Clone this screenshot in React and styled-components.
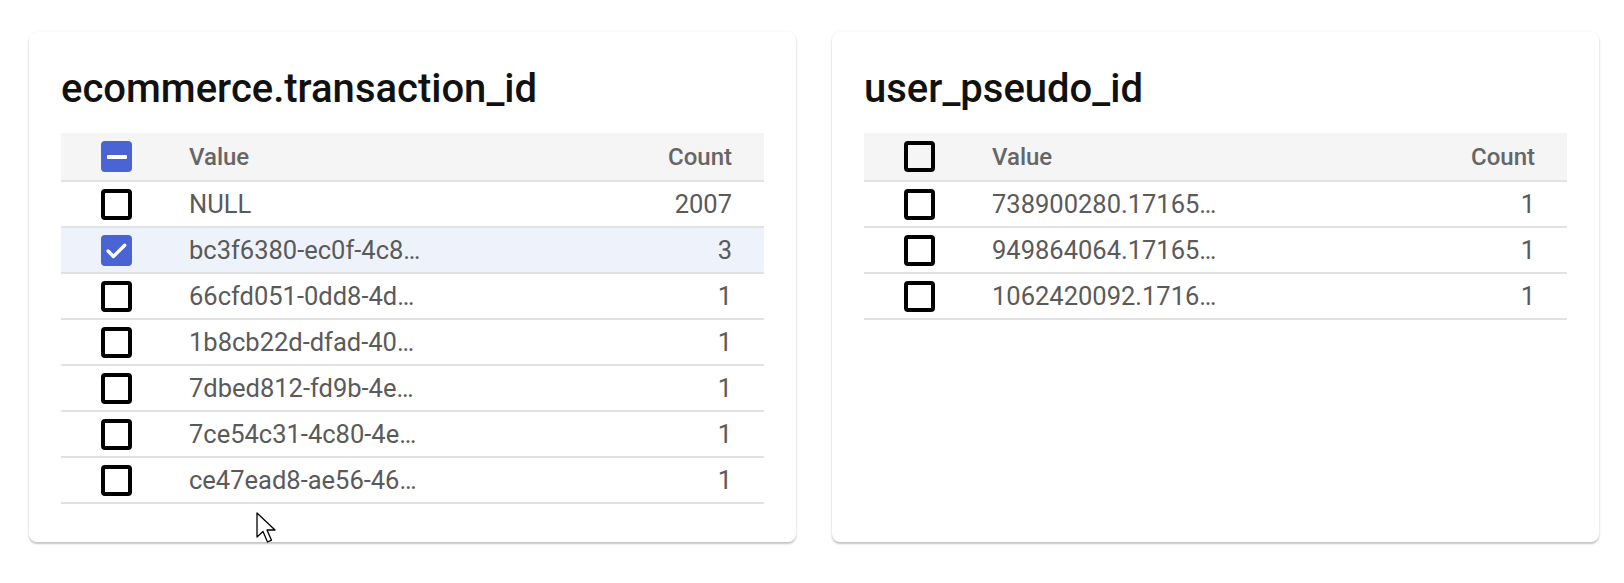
import React from 'react';
import styled, { createGlobalStyle } from 'styled-components';

const leftRows = [
  { value: 'NULL', count: 2007 },
  { value: 'bc3f6380-ec0f-4c8…', count: 3, checked: true },
  { value: '66cfd051-0dd8-4d…', count: 1 },
  { value: '1b8cb22d-dfad-40…', count: 1 },
  { value: '7dbed812-fd9b-4e…', count: 1 },
  { value: '7ce54c31-4c80-4e…', count: 1 },
  { value: 'ce47ead8-ae56-46…', count: 1 },
];

const rightRows = [
  { value: '738900280.17165…', count: 1 },
  { value: '949864064.17165…', count: 1 },
  { value: '1062420092.1716…', count: 1 },
];

const Checkbox = ({ state }) => {
  if (state === 'checked') {
    return (
      <Box filled>
        <svg width="27" height="27" viewBox="0 0 24 24">
          <path d="M4.5 12.5l4.8 4.8 10-10" fill="none" stroke="#fff" strokeWidth="3" strokeLinecap="round" strokeLinejoin="round" />
        </svg>
      </Box>
    );
  }
  if (state === 'mixed') {
    return (
      <Box filled>
        <Dash />
      </Box>
    );
  }
  return <Box />;
};

const FieldCard = ({ title, headerState, rows }) => (
  <Card>
    <Title>{title}</Title>
    <Table>
      <HeaderRow>
        <CheckCell>
          <Checkbox state={headerState} />
        </CheckCell>
        <HeadLabel>Value</HeadLabel>
        <HeadLabel right>Count</HeadLabel>
      </HeaderRow>
      {rows.map((r, i) => (
        <Row key={i} selected={r.checked}>
          <CheckCell>
            <Checkbox state={r.checked ? 'checked' : 'empty'} />
          </CheckCell>
          <Cell>{r.value}</Cell>
          <Cell right>{r.count}</Cell>
        </Row>
      ))}
    </Table>
  </Card>
);

const App = () => (
  <>
    <GlobalStyle />
    <Page>
      <FieldCard title="ecommerce.transaction_id" headerState="mixed" rows={leftRows} />
      <FieldCard title="user_pseudo_id" headerState="empty" rows={rightRows} />
      <Pointer width="22" height="34" viewBox="0 0 22 34">
        <path d="M1 1 L1 25 L7 19.5 L11.5 30 L15.5 28.2 L11 18 L19 18 Z" fill="#fff" stroke="#000" strokeWidth="1.3" strokeLinejoin="round" />
      </Pointer>
    </Page>
  </>
);

export default App;

const GlobalStyle = createGlobalStyle`
  body {
    margin: 0;
    background: #ffffff;
    font-family: Roboto, 'Liberation Sans', sans-serif;
  }
`;

const Page = styled.div`
  position: relative;
  display: flex;
  gap: 36px;
  padding: 32px 0 0 29px;
  height: 583px;
  box-sizing: border-box;
`;

const Card = styled.div`
  width: 767px;
  height: 510px;
  box-sizing: border-box;
  background: #fff;
  border-radius: 8px;
  box-shadow: 0 2px 2px rgba(0, 0, 0, 0.22), 0 0 3px rgba(0, 0, 0, 0.06);
  padding: 33px 32px 0 32px;
`;

const Title = styled.h2`
  margin: 0 0 20px 0;
  font-size: 40px;
  line-height: 48px;
  font-weight: 500;
  color: #111;
`;

const Table = styled.div`
  display: flex;
  flex-direction: column;
`;

const HeaderRow = styled.div`
  display: grid;
  grid-template-columns: 128px 1fr auto;
  align-items: center;
  height: 47px;
  padding-right: 32px;
  background: #f5f5f5;
  border-bottom: 2px solid #e2e2e2;
`;

const Row = styled(HeaderRow)`
  height: 44px;
  background: ${(p) => (p.selected ? '#eef2fb' : '#fff')};
`;

const CheckCell = styled.div`
  display: flex;
  padding-left: 40px;
`;

const Box = styled.div`
  width: 31px;
  height: 31px;
  box-sizing: border-box;
  border-radius: 4px;
  border: ${(p) => (p.filled ? 'none' : '4px solid #000')};
  background: ${(p) => (p.filled ? '#4a64d3' : 'transparent')};
  display: flex;
  align-items: center;
  justify-content: center;
`;

const Dash = styled.div`
  width: 20px;
  height: 4px;
  border-radius: 1px;
  background: #fff;
`;

const HeadLabel = styled.div`
  font-size: 24px;
  font-weight: 500;
  color: #666;
  text-align: ${(p) => (p.right ? 'right' : 'left')};
`;

const Cell = styled.div`
  font-size: 25.5px;
  color: #5a5a5a;
  white-space: nowrap;
  text-align: ${(p) => (p.right ? 'right' : 'left')};
`;

const Pointer = styled.svg`
  position: absolute;
  left: 256px;
  top: 512px;
`;
